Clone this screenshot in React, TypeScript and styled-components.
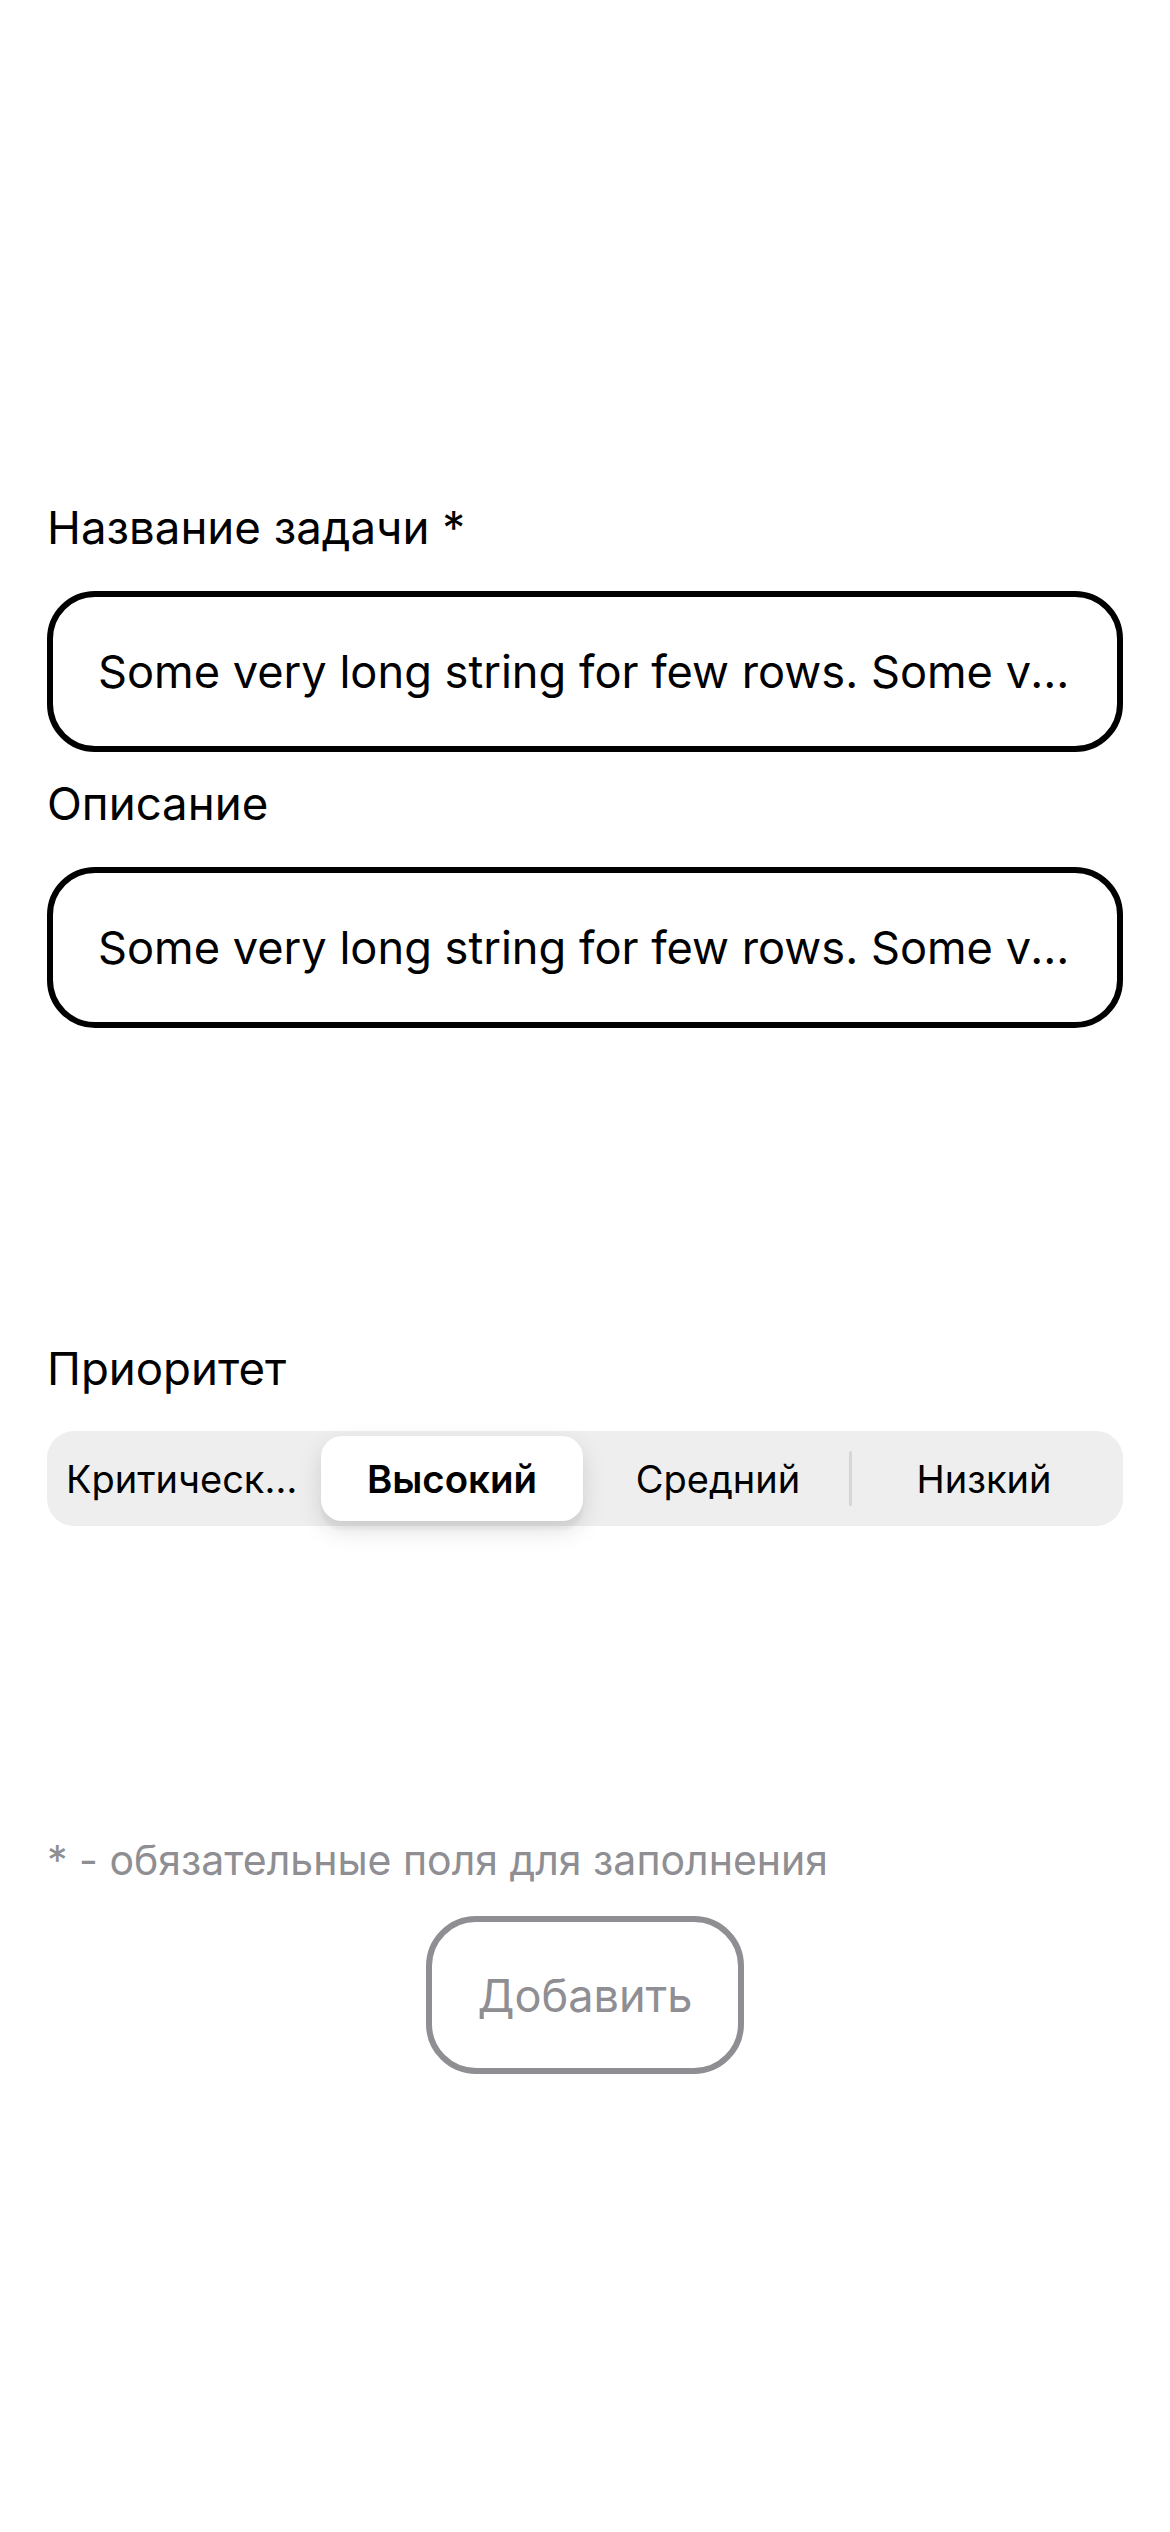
import React, { useState } from 'react';
import styled, { createGlobalStyle } from 'styled-components';

const GlobalStyle = createGlobalStyle`
  html, body { margin: 0; padding: 0; background: #fff; }
  body { font-family: Inter, "Noto Sans", sans-serif; color: #000; }
  * { box-sizing: border-box; }
`;

const Page = styled.main`
  width: 1170px;
  min-height: 2532px;
  padding: 498px 47px 0;
  display: flex;
  flex-direction: column;
`;

const Field = styled.div`
  display: flex;
  flex-direction: column;
  gap: 33px;
  & + & { margin-top: 22px; }
`;

const Label = styled.label`
  font-size: 45.6px;
  line-height: 60px;
  color: #000;
`;

const TextInput = styled.input`
  height: 161px;
  width: 100%;
  border: 6px solid #000;
  border-radius: 48px;
  padding: 0 45px;
  font-family: inherit;
  font-size: 45.2px;
  color: #000;
  background: #fff;
  text-overflow: ellipsis;
  outline: none;
`;

const PrioritySection = styled.section`
  margin-top: 311px;
  display: flex;
  flex-direction: column;
  gap: 32px;
`;

const Segmented = styled.div`
  height: 95px;
  background: #eeeeef;
  border-radius: 27px;
  padding: 5px 6px;
  display: grid;
  grid-template-columns: repeat(4, minmax(0, 1fr));
`;

const Segment = styled.button<{ $active?: boolean; $divider?: boolean }>`
  position: relative;
  min-width: 0;
  display: flex;
  align-items: center;
  justify-content: center;
  border: none;
  margin: 0 2px;
  padding: 0 11px;
  border-radius: 21px;
  background: ${(p) => (p.$active ? '#fff' : 'transparent')};
  box-shadow: ${(p) => (p.$active ? '0 9px 24px rgba(0,0,0,0.12), 0 9px 3px rgba(0,0,0,0.04)' : 'none')};
  font-family: inherit;
  font-size: ${(p) => (p.$active ? '38.4px' : '38px')};
  font-weight: ${(p) => (p.$active ? 600 : 400)};
  color: #000;
  cursor: pointer;
  &::before {
    content: '';
    display: ${(p) => (p.$divider ? 'block' : 'none')};
    position: absolute;
    left: -4px;
    top: 15px;
    bottom: 15px;
    width: 3px;
    border-radius: 2px;
    background: #d6d6d9;
  }
`;

const SegmentText = styled.span`
  min-width: 0;
  white-space: nowrap;
  overflow: hidden;
  text-overflow: ellipsis;
`;

const Footer = styled.footer`
  margin-top: 309px;
  display: flex;
  flex-direction: column;
  align-items: flex-start;
`;

const Note = styled.p`
  margin: 0;
  font-size: 41px;
  line-height: 50px;
  color: #8e8e93;
`;

const AddButton = styled.button`
  align-self: center;
  margin-top: 31px;
  height: 158px;
  padding: 0 45px;
  border: 6px solid #8e8e93;
  border-radius: 50px;
  background: #fff;
  font-family: inherit;
  font-size: 45.1px;
  color: #8e8e93;
`;

export default function App() {
  const [priority, setPriority] = useState(1);
  const options = ['Критический', 'Высокий', 'Средний', 'Низкий'];
  const long =
    'Some very long string for few rows. Some very long string for few rows. Some very long string for few rows.';
  return (
    <>
      <GlobalStyle />
      <Page>
        <Field>
          <Label>Название задачи *</Label>
          <TextInput readOnly value={long} />
        </Field>
        <Field>
          <Label>Описание</Label>
          <TextInput readOnly value={long} />
        </Field>
        <PrioritySection>
          <Label>Приоритет</Label>
          <Segmented>
            {options.map((o, i) => (
              <Segment
                key={o}
                $active={i === priority}
                $divider={i > 0 && i !== priority && i - 1 !== priority}
                onClick={() => setPriority(i)}
              >
                <SegmentText>{o}</SegmentText>
              </Segment>
            ))}
          </Segmented>
        </PrioritySection>
        <Footer>
          <Note>* - обязательные поля для заполнения</Note>
          <AddButton>Добавить</AddButton>
        </Footer>
      </Page>
    </>
  );
}
